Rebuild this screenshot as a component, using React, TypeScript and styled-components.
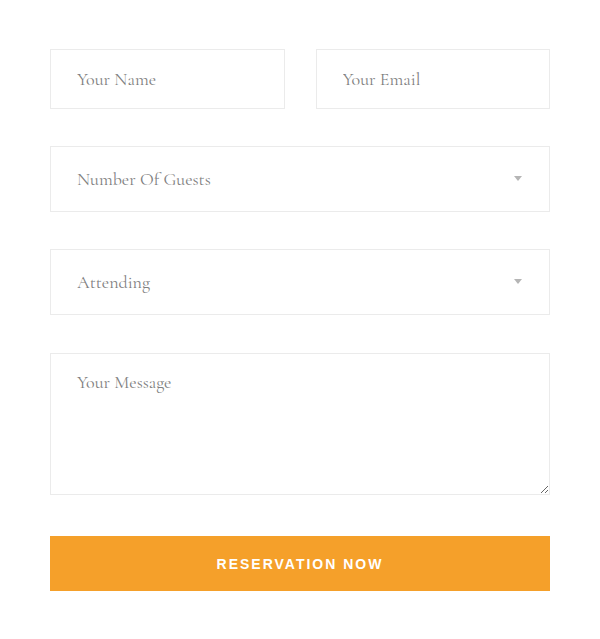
import styled, { createGlobalStyle } from "styled-components";

const GlobalStyle = createGlobalStyle`
  body {
    margin: 0;
    background: #fff;
  }
`;

const StyledForm = styled.form`
  width: 500px;
  padding: 49px 50px;
  display: flex;
  flex-direction: column;
  gap: 37px;
`;

const StyledRow = styled.div`
  display: grid;
  grid-template-columns: 1fr 1fr;
  gap: 31px;
`;

const fieldText = `
  font-family: "Cormorant Garamond", "Liberation Serif", serif;
  font-size: 18px;
  color: #808080;
`;

const StyledInput = styled.input`
  box-sizing: border-box;
  width: 100%;
  height: 60px;
  padding: 0 26px;
  border: 1px solid #ebebeb;
  outline: none;
  background: #fff;
  ${fieldText}

  &::placeholder {
    color: #808080;
  }
`;

const StyledSelectWrap = styled.div`
  position: relative;
`;

const StyledSelect = styled.select`
  box-sizing: border-box;
  width: 100%;
  height: 66px;
  padding: 0 26px;
  border: 1px solid #ebebeb;
  border-radius: 0;
  outline: none;
  background: #fff;
  appearance: none;
  ${fieldText}
`;

const StyledArrow = styled.span`
  position: absolute;
  right: 28px;
  top: 30px;
  width: 0;
  height: 0;
  border-left: 4px solid transparent;
  border-right: 4px solid transparent;
  border-top: 5px solid #b5b5b5;
  pointer-events: none;
`;

const StyledTextarea = styled.textarea`
  box-sizing: border-box;
  width: 100%;
  height: 142px;
  margin-top: 1px;
  padding: 17px 26px;
  border: 1px solid #ebebeb;
  outline: none;
  background: #fff;
  resize: vertical;
  ${fieldText}

  &::placeholder {
    color: #808080;
  }
`;

const StyledButton = styled.button`
  height: 55px;
  margin-top: 4px;
  border: none;
  background: #f5a02a;
  color: #fff;
  font-family: "Liberation Sans", Arial, sans-serif;
  font-weight: 700;
  font-size: 14px;
  letter-spacing: 2px;
  text-transform: uppercase;
  cursor: pointer;
`;

function Select({ label }: { label: string }) {
  return (
    <StyledSelectWrap>
      <StyledSelect defaultValue="">
        <option value="" disabled>
          {label}
        </option>
      </StyledSelect>
      <StyledArrow />
    </StyledSelectWrap>
  );
}

export default function App() {
  return (
    <>
      <GlobalStyle />
      <StyledForm onSubmit={(e) => e.preventDefault()}>
        <StyledRow>
          <StyledInput type="text" placeholder="Your Name" />
          <StyledInput type="email" placeholder="Your Email" />
        </StyledRow>
        <Select label="Number Of Guests" />
        <Select label="Attending" />
        <StyledTextarea placeholder="Your Message" />
        <StyledButton type="submit">Reservation Now</StyledButton>
      </StyledForm>
    </>
  );
}
